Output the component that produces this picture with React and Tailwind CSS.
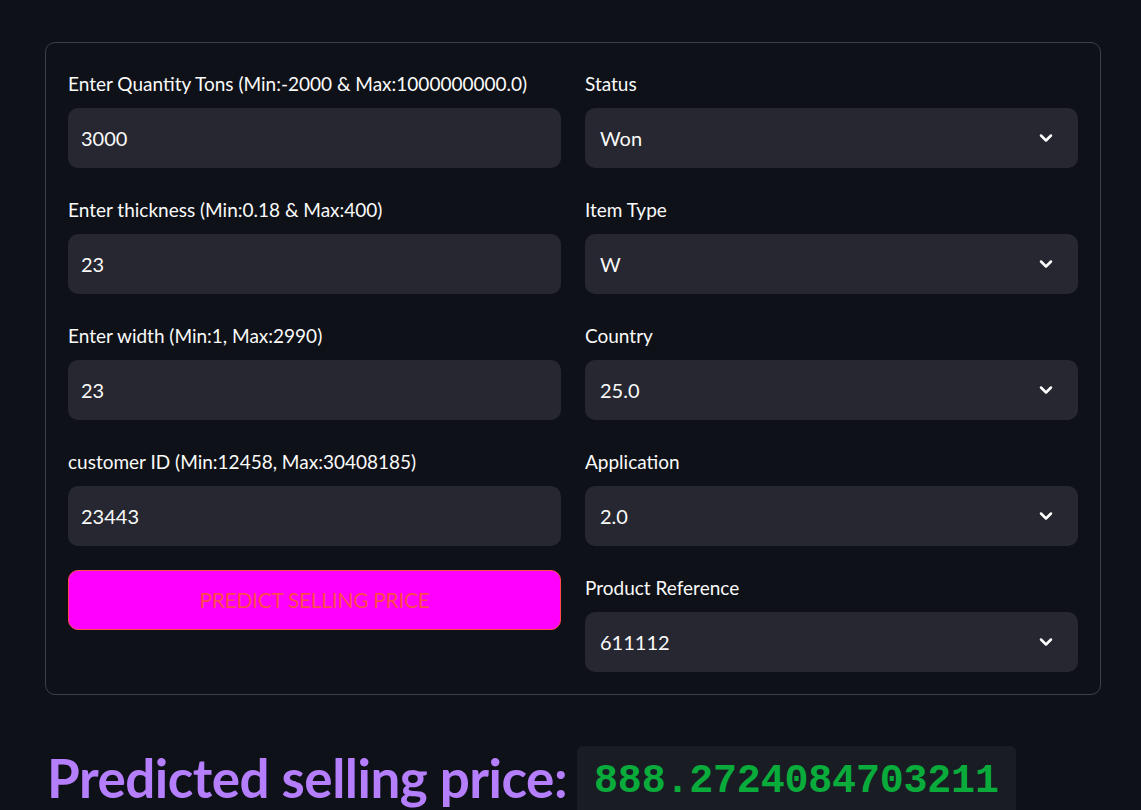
import { ChevronDown } from 'lucide-react';

const font = { fontFamily: 'Lato, "Noto Sans", sans-serif' };

const NumberField = ({ label, value }) => (
  <div className="flex flex-col">
    <label className="text-[19px] leading-[28px] text-[#fafafa] mb-[10px]">{label}</label>
    <div className="h-[60px] rounded-[10px] bg-[#262730] flex items-center px-[13px] text-[20px] text-[#fafafa]">
      {value}
    </div>
  </div>
);

const SelectField = ({ label, value }) => (
  <div className="flex flex-col">
    <label className="text-[19px] leading-[28px] text-[#fafafa] mb-[10px]">{label}</label>
    <div className="h-[60px] rounded-[10px] bg-[#262730] flex items-center justify-between pl-[15px] pr-[22px] text-[20px] text-[#fafafa]">
      <span>{value}</span>
      <ChevronDown size={20} strokeWidth={3} className="text-white" />
    </div>
  </div>
);

export default function App() {
  return (
    <div className="min-h-screen bg-[#0e1117] pt-[42px] px-[45px] pb-[60px] text-[#fafafa]" style={font}>
      <div className="w-[1056px] border border-[#3d3f46] rounded-[10px] px-[22px] pt-[27px] pb-[22px] grid grid-cols-2 gap-x-[24px]">
        <div className="flex flex-col gap-[28px]">
          <NumberField label="Enter Quantity Tons (Min:-2000 & Max:1000000000.0)" value="3000" />
          <NumberField label="Enter thickness (Min:0.18 & Max:400)" value="23" />
          <NumberField label="Enter width (Min:1, Max:2990)" value="23" />
          <NumberField label="customer ID (Min:12458, Max:30408185)" value="23443" />
          <button className="-mt-[4px] h-[60px] rounded-[10px] bg-[#ff00ff] border border-[#ff4b4b] text-[#ff4b4b] text-[21px] tracking-[-0.3px]">
            PREDICT SELLING PRICE
          </button>
        </div>
        <div className="flex flex-col gap-[28px]">
          <SelectField label="Status" value="Won" />
          <SelectField label="Item Type" value="W" />
          <SelectField label="Country" value="25.0" />
          <SelectField label="Application" value="2.0" />
          <SelectField label="Product Reference" value="611112" />
        </div>
      </div>
      <div className="mt-[51px] flex items-start">
        <h2 className="text-[53px] leading-[64px] font-bold text-[#b57efc] ml-[2px] mr-[10px] tracking-[-0.5px]">
          Predicted selling price:
        </h2>
        <div className="bg-[#1a1c24] rounded-[6px] px-[17px] h-[80px] flex items-center">
          <code className="text-[40px] font-bold text-[#09ab3b] -mt-[8px] tracking-[-0.2px]" style={{ fontFamily: '"Liberation Mono", monospace' }}>
            888.2724084703211
          </code>
        </div>
      </div>
    </div>
  );
}
